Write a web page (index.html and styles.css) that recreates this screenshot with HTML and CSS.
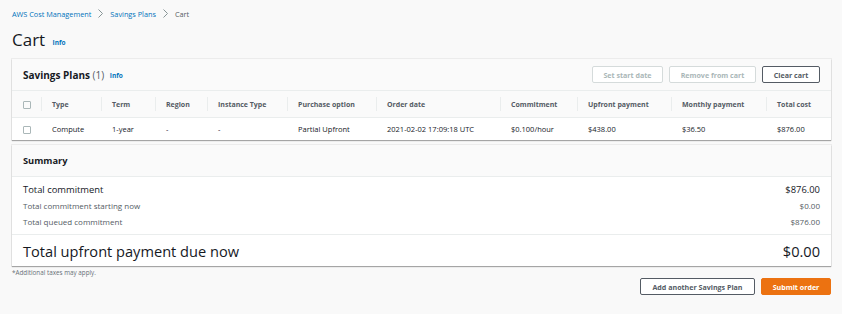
FILE: index.html
```html
<!DOCTYPE html>
<html lang="en">

<head>
    <meta charset="UTF-8">
    <meta name="viewport" content="width=device-width, initial-scale=1.0">
    <title>Cart</title>
    <link rel="stylesheet" href="styles.css">
</head>

<body>
    <!-- Breadcrumbs -->
    <nav class="crumbs">
        <a href="#">AWS Cost Management</a>
        <svg class="sep" width="5" height="9" viewBox="0 0 5 9"><path d="M0.5 0.5 L4.5 4.5 L0.5 8.5" fill="none" stroke="#879596" stroke-width="1"/></svg>
        <a href="#">Savings Plans</a>
        <svg class="sep" width="5" height="9" viewBox="0 0 5 9"><path d="M0.5 0.5 L4.5 4.5 L0.5 8.5" fill="none" stroke="#879596" stroke-width="1"/></svg>
        <span class="current">Cart</span>
    </nav>

    <h1 class="page-title">Cart <a href="#" class="info">Info</a></h1>

    <!-- Savings Plans table -->
    <div class="card">
        <div class="card-head">
            <h2>Savings Plans <span class="count">(1)</span> <a href="#" class="info">Info</a></h2>
            <div class="actions">
                <button class="btn disabled w-start">Set start date</button>
                <button class="btn disabled w-remove">Remove from cart</button>
                <button class="btn w-clear">Clear cart</button>
            </div>
        </div>
        <table class="plans">
            <colgroup>
                <col style="width: 29px">
                <col style="width: 60px">
                <col style="width: 54px">
                <col style="width: 52px">
                <col style="width: 80px">
                <col style="width: 89px">
                <col style="width: 124px">
                <col style="width: 77px">
                <col style="width: 94px">
                <col style="width: 95px">
                <col style="width: 65px">
            </colgroup>
            <thead>
                <tr>
                    <th class="check"><span class="box"></span></th>
                    <th>Type</th>
                    <th>Term</th>
                    <th>Region</th>
                    <th>Instance Type</th>
                    <th>Purchase option</th>
                    <th>Order date</th>
                    <th>Commitment</th>
                    <th>Upfront payment</th>
                    <th>Monthly payment</th>
                    <th>Total cost</th>
                </tr>
            </thead>
            <tbody>
                <tr>
                    <td class="check"><span class="box"></span></td>
                    <td>Compute</td>
                    <td>1-year</td>
                    <td>-</td>
                    <td>-</td>
                    <td>Partial Upfront</td>
                    <td>2021-02-02 17:09:18 UTC</td>
                    <td>$0.100/hour</td>
                    <td>$438.00</td>
                    <td>$36.50</td>
                    <td>$876.00</td>
                </tr>
            </tbody>
        </table>
    </div>

    <!-- Summary -->
    <div class="card last">
        <div class="card-head">
            <h2 class="small">Summary</h2>
        </div>
        <div class="summary">
            <div class="line main"><span>Total commitment</span><span>$876.00</span></div>
            <div class="line sub"><span>Total commitment starting now</span><span>$0.00</span></div>
            <div class="line sub"><span>Total queued commitment</span><span>$876.00</span></div>
        </div>
        <div class="total">
            <span>Total upfront payment due now</span><span>$0.00</span>
        </div>
    </div>

    <p class="note">*Additional taxes may apply.</p>

    <div class="footer-actions">
        <button class="btn w-add">Add another Savings Plan</button>
        <button class="btn primary w-submit">Submit order</button>
    </div>
</body>

</html>
```

FILE: styles.css
```css
body {
    font-family: "Open Sans", Arial, sans-serif;
    margin: 0;
    padding: 8px 11px 0 12px;
    background-color: #f9f9f9;
    color: #16191f;
    font-size: 7.5px;
}

a {
    color: #0073bb;
    text-decoration: none;
}

/* Breadcrumbs */
.crumbs {
    display: flex;
    align-items: center;
    gap: 7px;
    height: 11px;
    font-size: 7.3px;
}

.crumbs .current {
    color: #545b64;
}

.page-title {
    margin: 10px 0 0;
    font-size: 17px;
    font-weight: 400;
    height: 30px;
    line-height: 22px;
}

.info {
    font-size: 6.5px;
    font-weight: 700;
    margin-left: 3px;
    vertical-align: 1px;
}

/* Cards */
.card {
    background: white;
    box-shadow: 0 1px 1px rgba(0, 0, 0, 0.3), 0 0 0 1px rgba(0, 0, 0, 0.05);
    margin-bottom: 5px;
}

.card.last {
    margin-bottom: 0;
}

.card-head {
    display: flex;
    align-items: center;
    justify-content: space-between;
    background: #fafafa;
    height: 31px;
    padding: 0 11px;
    border-bottom: 1px solid #eaeded;
}

.card-head h2 {
    margin: 0;
    font-size: 10px;
    font-weight: 700;
}

.card-head h2.small {
    font-size: 9.3px;
}

.card-head .count {
    font-weight: 400;
    color: #545b64;
}

.actions {
    display: flex;
    gap: 6px;
}

.btn {
    font-family: inherit;
    font-size: 7.1px;
    font-weight: 700;
    background: white;
    color: #545b64;
    border: 1px solid #545b64;
    border-radius: 2px;
    padding: 0;
    height: 17px;
    cursor: pointer;
}

.btn.disabled {
    color: #aab7b8;
    border-color: #d5dbdb;
}

.btn.primary {
    background: #ec7211;
    border-color: #ec7211;
    color: white;
}

.w-start { width: 71px; }
.w-remove { width: 87px; }
.w-clear { width: 58px; }
.w-add { width: 115px; }
.w-submit { width: 70px; }

/* Table */
.plans {
    width: 100%;
    border-collapse: collapse;
    table-layout: fixed;
}

.plans th,
.plans td {
    text-align: left;
    padding: 0 0 0 11px;
    white-space: nowrap;
}

.plans th {
    background: #fafafa;
    font-weight: 700;
    font-size: 7px;
    color: #545b64;
    height: 26px;
    border-bottom: 1px solid #eaeded;
    position: relative;
}

.plans th + th::before {
    content: "";
    position: absolute;
    left: 0;
    top: 6px;
    bottom: 6px;
    border-left: 1px solid #eaeded;
}

.plans td {
    height: 22px;
}

.box {
    display: inline-block;
    width: 6px;
    height: 6px;
    border: 1px solid #aab7b8;
    border-radius: 1px;
    vertical-align: middle;
}

/* Summary */
.summary {
    padding: 4px 11px 5px;
    border-bottom: 1px solid #eaeded;
}

.line {
    display: flex;
    justify-content: space-between;
    align-items: center;
}

.line.main {
    font-size: 9.4px;
    height: 16px;
}

.line.sub {
    font-size: 8px;
    color: #545b64;
    height: 16px;
}

.total {
    display: flex;
    justify-content: space-between;
    align-items: center;
    font-size: 14.6px;
    height: 31px;
    padding: 0 11px;
}

.note {
    margin: 2px 0 0;
    font-size: 6.3px;
    line-height: 9px;
    color: #687078;
}

.footer-actions {
    display: flex;
    justify-content: flex-end;
    gap: 6px;
    margin-top: 1px;
}
```
